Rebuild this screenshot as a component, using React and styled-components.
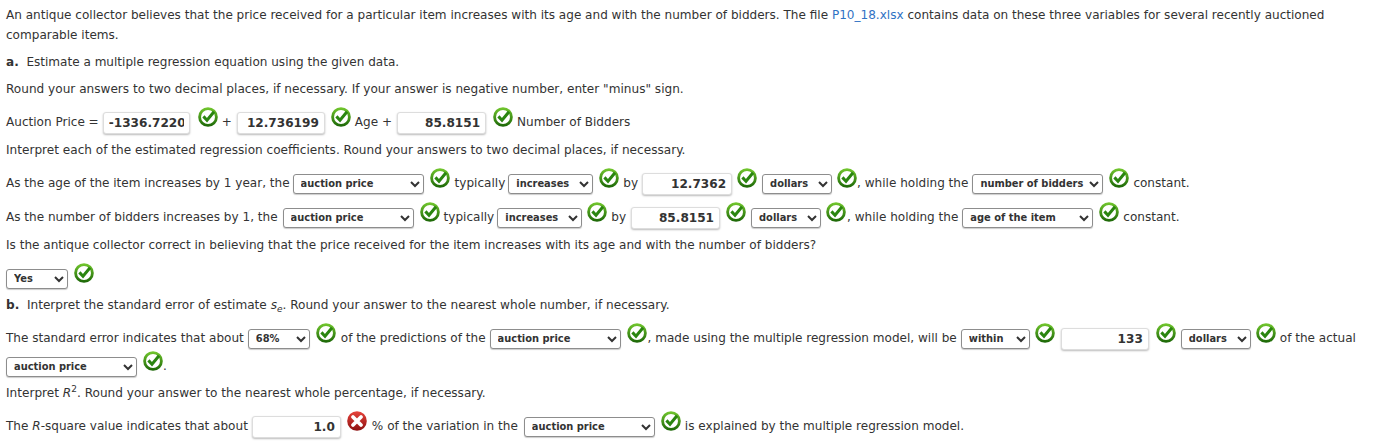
import React from "react";
import styled, { createGlobalStyle } from "styled-components";

const Global = createGlobalStyle`
  html, body { margin: 0; padding: 0; background: #fff; }
  body { font-family: "DejaVu Sans", Verdana, sans-serif; font-size: 12.05px; color: #333; }
`;

const Page = styled.div`
  width: 1392px;
  height: 448px;
  overflow: hidden;
  box-sizing: border-box;
  padding: 5px 0 0 6px;
`;

const Para = styled.p`
  margin: ${(p) => p.$top || 0}px 0 0;
  line-height: 20px;
  width: 1340px;
  font-size: ${(p) => p.$fs || 12.05}px;
`;

const Link = styled.span`
  color: #2f72c4;
`;

const Row = styled.div`
  display: flex;
  align-items: center;
  gap: 4px;
  height: 24px;
  margin-top: ${(p) => p.$top || 0}px;
  white-space: pre;
`;

const Select = styled.select`
  width: ${(p) => p.$w}px;
  height: 20px;
  box-sizing: border-box;
  padding: 0 0 0 3px;
  margin: 1px 0 0 ${(p) => p.$ml || 0}px;
  font-family: "DejaVu Sans", Verdana, sans-serif;
  font-size: 9.9px;
  font-weight: 700;
  color: #333;
  background: #fff;
  border: 1px solid #8d8d8d;
  border-radius: 3px;
  box-shadow: 0 1px 1px #ccc;
`;

const Input = styled.input`
  width: ${(p) => p.$w}px;
  height: 22px;
  box-sizing: border-box;
  padding: 0 5px;
  margin: 1px 0 0 ${(p) => p.$ml || 0}px;
  text-align: right;
  font-family: "DejaVu Sans", Verdana, sans-serif;
  font-size: 12.1px;
  font-weight: 700;
  color: #333;
  background: #fff;
  border: 1px solid #ddd;
  border-radius: 3px;
  box-shadow: 0 1px 2px #bbb;
`;

const Mark = styled.svg`
  width: 20px;
  height: 20px;
  flex: none;
  margin: 0 ${(p) => p.$mr ?? 0}px 10px ${(p) => p.$ml ?? 2}px;
`;

const Em = styled.i`
  font-style: italic;
`;

const Sup = styled.sup`
  font-size: 9px;
  line-height: 0;
`;

const Sub = styled.sub`
  font-size: 9px;
  line-height: 0;
`;

const Check = (props) => (
  <Mark viewBox="0 0 20 20" {...props}>
    <defs>
      <linearGradient id="gc" x1="0" y1="0" x2="0" y2="1">
        <stop offset="0" stopColor="#74c92f" />
        <stop offset="1" stopColor="#1a6506" />
      </linearGradient>
    </defs>
    <circle cx="10" cy="10" r="9.8" fill="url(#gc)" />
    <circle cx="10" cy="10" r="7" fill="#fff" />
    <path d="M5.4 9.4 L9 13.2 L16 4.8" fill="none" stroke="#2a8510" strokeWidth="3" />
  </Mark>
);

const Cross = (props) => (
  <Mark viewBox="0 0 20 20" {...props}>
    <defs>
      <linearGradient id="gx" x1="0" y1="0" x2="0" y2="1">
        <stop offset="0" stopColor="#e8443c" />
        <stop offset="1" stopColor="#8c1010" />
      </linearGradient>
    </defs>
    <circle cx="10" cy="10" r="9.8" fill="url(#gx)" />
    <path d="M6 6 L14 14 M14 6 L6 14" stroke="#fff" strokeWidth="3.8" strokeLinecap="round" />
  </Mark>
);

const Pick = ({ w, v, ml }) => (
  <Select $w={w} $ml={ml} defaultValue={v}>
    <option>{v}</option>
  </Select>
);

export default function App() {
  return (
    <Page>
      <Global />
      <Para>
        An antique collector believes that the price received for a particular item increases with its age and with the number of bidders. The file <Link>P10_18.xlsx</Link> contains data on these three variables for several recently auctioned comparable items.
      </Para>
      <Para $top={7}><b>a.</b>&nbsp; Estimate a multiple regression equation using the given data.</Para>
      <Para $top={7} $fs={12.1}>Round your answers to two decimal places, if necessary. If your answer is negative number, enter "minus" sign.</Para>
      <Row $top={11}>
        Auction Price =
        <Input $w={87} value="-1336.7220" readOnly />
        <Check $ml={4} />
        +
        <Input $w={88} $ml={1} value="12.736199" readOnly />
        <Check />
        Age +
        <Input $w={89} $ml={1} value="85.8151" readOnly />
        <Check $ml={3} />
        Number of Bidders
      </Row>
      <Para $top={6} $fs={12.1}>Interpret each of the estimated regression coefficients. Round your answers to two decimal places, if necessary.</Para>
      <Row $top={11}>
        As the age of the item increases by 1 year, the
        <Pick w={131} ml={-1} v="auction price" />
        <Check $mr={1} />
        typically
        <Pick w={85} ml={-1} v="increases" />
        <Check />
        by
        <Input $w={90} value="12.7362" readOnly />
        <Check $ml={1} />
        <Pick w={70} ml={1} v="dollars" />
        <Check $ml={1} $mr={-4} />
        , while holding the
        <Pick w={131} v="number of bidders" />
        <Check />
        constant.
      </Row>
      <Row $top={10}>
        As the number of bidders increases by 1, the
        <Pick w={131} ml={1} v="auction price" />
        <Check />
        typically
        <Pick w={85} ml={-1} v="increases" />
        <Check $ml={1} />
        by
        <Input $w={89} $ml={1} value="85.8151" readOnly />
        <Check $ml={2} />
        <Pick w={70} ml={1} v="dollars" />
        <Check $ml={1} $mr={-3} />
        , while holding the
        <Pick w={131} v="age of the item" />
        <Check />
        constant.
      </Row>
      <Para $top={6}>Is the antique collector correct in believing that the price received for the item increases with its age and with the number of bidders?</Para>
      <Row $top={11}>
        <Pick w={62} v="Yes" />
        <Check />
      </Row>
      <Para $top={5} $fs={12.1}><b>b.</b>&nbsp; Interpret the standard error of estimate <Em>s</Em><Sub><Em>e</Em></Sub>. Round your answer to the nearest whole number, if necessary.</Para>
      <Row $top={11}>
        The standard error indicates that about
        <Pick w={62} v="68%" />
        <Check $mr={1} />
        of the predictions of the
        <Pick w={131} v="auction price" />
        <Check $mr={-3} />
        , made using the multiple regression model, will be
        <Pick w={69} v="within" />
        <Check $ml={1} />
        <Input $w={88} $ml={2} value="133" readOnly />
        <Check $ml={3} />
        <Pick w={70} ml={1} v="dollars" />
        <Check $ml={1} />
        of the actual
      </Row>
      <Row $top={4}>
        <Pick w={131} v="auction price" />
        <Check $mr={-4} />
        .
      </Row>
      <Para $top={5} $fs={12.1}>Interpret <Em>R</Em><Sup>2</Sup>. Round your answer to the nearest whole percentage, if necessary.</Para>
      <Row $top={11}>
        <span>The <Em>R</Em>-square value indicates that about</span>
        <Input $w={89} value="1.0" readOnly />
        <Cross $ml={2} $mr={1} />
        % of the variation in the
        <Pick w={131} ml={2} v="auction price" />
        <Check />
        is explained by the multiple regression model.
      </Row>
    </Page>
  );
}
